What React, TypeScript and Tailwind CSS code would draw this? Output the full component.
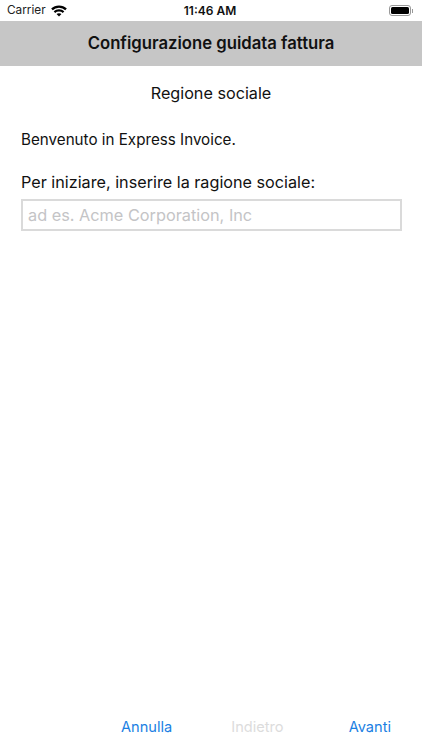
export default function App() {
  return (
    <div className="w-[422px] h-[750px] bg-white flex flex-col font-['Inter','Roboto',sans-serif] text-black overflow-hidden">
      {/* status bar */}
      <div className="h-[21px] shrink-0 pl-[7px] pr-[9px] grid grid-cols-3 items-center">
        <div className="flex items-center gap-[5px]">
          <span className="text-[11.8px] text-[#222]">Carrier</span>
          <svg width="16" height="12" viewBox="0 0 15 11" fill="none" stroke="#000" strokeWidth="2.1">
            <path d="M0.9 4 C4.5 0.4 10.5 0.4 14.1 4" />
            <path d="M3.2 6.5 C5.6 4.4 9.4 4.4 11.8 6.5" />
            <path d="M7.5 10.6 L5.2 8.3 C6.5 7.3 8.5 7.3 9.8 8.3 Z" fill="#000" stroke="none" />
          </svg>
        </div>
        <div className="text-[12px] font-semibold text-center text-[#111]">11:46 AM</div>
        <div className="flex justify-end items-center gap-[1px]">
          <div className="w-[22px] h-[11px] rounded-[3px] border border-[#999] p-[1px]">
            <div className="w-full h-full rounded-[1.5px] bg-black" />
          </div>
          <div className="w-[1px] h-[4px] bg-[#999]" />
        </div>
      </div>

      {/* title bar */}
      <div className="h-[45px] shrink-0 bg-[#c6c6c6] flex items-center justify-center">
        <h1 className="text-[16.7px] font-semibold text-[#111]">Configurazione guidata fattura</h1>
      </div>

      {/* form */}
      <div className="flex-1 flex flex-col px-[21px]">
        <p className="mt-[16px] text-center text-[16.2px] leading-[22px] text-[#111]">Regione sociale</p>
        <p className="mt-[26px] text-[15.2px] leading-[20px] text-[#111]">Benvenuto in Express Invoice.</p>
        <p className="mt-[21px] text-[16.2px] leading-[22px] text-[#111]">Per iniziare, inserire la ragione sociale:</p>
        <div className="mt-[6px] w-[381px] h-[32px] border-2 border-[#dadada] flex items-center px-[5px]">
          <span className="text-[16.3px] text-[#c4c4c6]">ad es. Acme Corporation, Inc</span>
        </div>
      </div>

      {/* bottom toolbar */}
      <div className="h-[44px] shrink-0 flex items-start pt-[11px] pl-[121px] pr-[31px] text-[14.6px] leading-[20px]">
        <span className="text-[#1b7fe3]">Annulla</span>
        <span className="ml-[59px] text-[#dcdcdc]">Indietro</span>
        <span className="ml-auto text-[#1b7fe3]">Avanti</span>
      </div>
    </div>
  );
}
